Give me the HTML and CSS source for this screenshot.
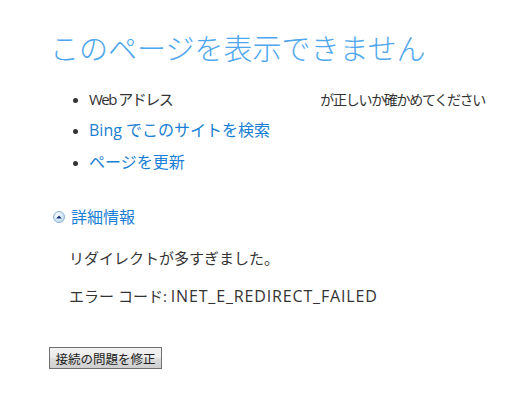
FILE: index.html
```html
<!DOCTYPE html>
<html lang="ja">
<head>
<meta charset="utf-8">
<link rel="stylesheet" href="styles.css">
</head>
<body>
<main class="page">
  <h1 class="title">このページを表示できません</h1>
  <ul class="tips">
    <li class="tip"><span class="addr">Web アドレス</span><span class="url"></span><span class="check">が正しいか確かめてください</span></li>
    <li class="tip"><a class="link" href="#">Bing でこのサイトを検索</a></li>
    <li class="tip"><a class="link" href="#">ページを更新</a></li>
  </ul>
  <div class="details-head">
    <svg class="toggle" width="12" height="12" viewBox="0 0 12 12">
      <defs>
        <radialGradient id="g" cx="0.4" cy="0.35" r="0.7">
          <stop offset="0" stop-color="#ffffff"/>
          <stop offset="1" stop-color="#b9d6f0"/>
        </radialGradient>
      </defs>
      <circle cx="6" cy="6" r="5.5" fill="url(#g)" stroke="#8fb3d6" stroke-width="1"/>
      <polygon points="3.2,7.4 6,4.4 8.8,7.4" fill="#0a2c6e"/>
    </svg>
    <span class="details-title">詳細情報</span>
  </div>
  <p class="detail">リダイレクトが多すぎました。</p>
  <p class="detail">エラー コード: <span class="code">INET_E_REDIRECT_FAILED</span></p>
  <button class="fix" type="button">接続の問題を修正</button>
</main>
</body>
</html>
```

FILE: styles.css
```css
html, body {
  margin: 0;
  padding: 0;
  background: #ffffff;
}
body {
  font-family: "Open Sans", "Noto Sans CJK JP", sans-serif;
  color: #333333;
}
.page {
  padding: 30px 0 0 50px;
  display: flex;
  flex-direction: column;
  align-items: flex-start;
}
.title {
  margin: 0;
  font-family: "Noto Sans CJK JP", sans-serif;
  font-size: 29px;
  line-height: 35px;
  font-weight: 300;
  color: #4ea6ee;
}
.tips {
  margin: 24px 0 0 0;
  padding: 0 0 0 39px;
  font-size: 15px;
  line-height: 20px;
  white-space: nowrap;
}
.tip {
  margin: 0 0 10px 0;
  color: #333333;
}
.tip:last-child {
  margin-top: 12px;
}
.tip::marker {
  font-size: 13px;
}
.addr {
  letter-spacing: -1.5px;
}
.url {
  display: inline-block;
  width: 148px;
}
.check {
  font-size: 14px;
  letter-spacing: -1.3px;
}
.link {
  color: #1a7fd4;
  text-decoration: none;
  font-size: 16px;
}
.details-head {
  margin-top: 24px;
  margin-left: 3px;
  display: flex;
  align-items: center;
  gap: 6px;
}
.toggle {
  display: block;
}
.details-title {
  font-size: 16px;
  line-height: 22px;
  color: #1a7fd4;
}
.detail {
  margin: 0;
  padding-left: 19px;
  font-size: 15px;
  line-height: 20px;
  color: #333333;
}
.code {
  font-size: 16px;
  letter-spacing: 0.85px;
}
.details-head + .detail {
  margin-top: 20px;
}
.detail + .detail {
  margin-top: 18px;
}
.fix {
  margin-top: 41px;
  margin-left: -1px;
  width: 113px;
  height: 22px;
  padding: 0;
  font-family: "Noto Sans CJK JP", sans-serif;
  font-size: 12.5px;
  color: #222222;
  border: 1px solid #707070;
  border-radius: 0;
  background: linear-gradient(#f2f2f2, #ebebeb 50%, #dddddd 50%, #cfcfcf);
}
```
